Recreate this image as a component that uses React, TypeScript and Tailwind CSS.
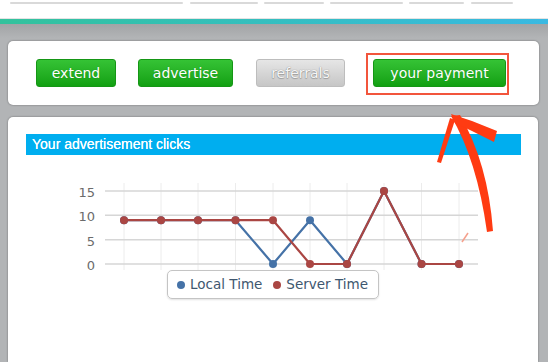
import React from "react";

const XS = [116, 153, 190, 227.5, 265, 302, 339, 376, 413.5, 451];
const yv = (v: number) => 109 - (v * 73) / 15;
const RED = [9, 9, 9, 9, 9, 0, 0, 15, 0, 0];
const BLUE = [9, 9, 9, 9, 0, 9, 0, 15, 0, 0];

function Chart() {
  const pts = (d: number[]) => d.map((v, i) => `${XS[i]},${yv(v)}`).join(" ");
  return (
    <svg width={531} height={115} className="block overflow-visible">
      {XS.map((x) => (
        <line key={"v" + x} x1={x} x2={x} y1={28} y2={115} stroke="#ececec" strokeWidth={1} />
      ))}
      {[0, 5, 10, 15].map((v) => (
        <g key={v}>
          <line x1={97} x2={470} y1={yv(v)} y2={yv(v)} stroke="#d6d6d6" strokeWidth={1.5} />
          <text
            x={87}
            y={yv(v) + 6}
            textAnchor="end"
            fontSize={13}
            fill="#6b6b6b"
            fontFamily="'DejaVu Sans', sans-serif"
          >
            {v}
          </text>
        </g>
      ))}
      <polyline points={pts(BLUE)} fill="none" stroke="#4572a7" strokeWidth={2.2} strokeLinejoin="round" />
      {BLUE.map((v, i) => (
        <circle key={"b" + i} cx={XS[i]} cy={yv(v)} r={4} fill="#4572a7" />
      ))}
      <polyline points={pts(RED)} fill="none" stroke="#aa4643" strokeWidth={2.2} strokeLinejoin="round" />
      {RED.map((v, i) => (
        <circle key={"r" + i} cx={XS[i]} cy={yv(v)} r={4} fill="#aa4643" />
      ))}
    </svg>
  );
}

function Btn({ label, w, disabled }: { label: string; w: string; disabled?: boolean }) {
  if (disabled) {
    return (
      <div
        className={`${w} h-[28px] flex items-center justify-center rounded-[3px] border border-[#bdbdbd] bg-gradient-to-b from-[#e6e6e6] to-[#c6c6c6] text-[14px] text-[#f6f6f6] [text-shadow:0_0_1px_#7f7f7f,0_1px_1px_#a0a0a0]`}
      >
        {label}
      </div>
    );
  }
  return (
    <div
      className={`${w} h-[28px] flex items-center justify-center rounded-[3px] border border-[#159615] bg-gradient-to-b from-[#35c335] to-[#11a011] text-[14px] text-white [text-shadow:0_0_1px_rgba(0,80,0,0.4)]`}
    >
      {label}
    </div>
  );
}

export default function App() {
  return (
    <div className="relative w-[548px] h-[362px] overflow-hidden bg-white font-['DejaVu_Sans',sans-serif]">
      {/* top tabs */}
      <div className="h-[19px] border-b border-[#e4e4e4] flex items-start pt-[2px] pl-[10px]">
        <div className="flex gap-[6px]">
          <div className="w-[173px] h-[2px] rounded-full bg-[#d9d9d9]" />
          <div className="w-[68px] h-[2px] rounded-full bg-[#d9d9d9] ml-[1px]" />
          <div className="w-[60px] h-[2px] rounded-full bg-[#d9d9d9]" />
          <div className="w-[73px] h-[2px] rounded-full bg-[#d9d9d9]" />
          <div className="w-[55px] h-[2px] rounded-full bg-[#d9d9d9]" />
          <div className="w-[42px] h-[2px] rounded-full bg-[#d9d9d9] ml-[1px]" />
        </div>
      </div>
      {/* teal bar */}
      <div className="h-[5px] bg-gradient-to-r from-[#34c29c] to-[#3ab9e2]" />
      {/* gray area */}
      <div className="h-[338px] pl-[8px] pr-[9px] pt-[17px] bg-[linear-gradient(#a2a4a6,#b2b4b6_14px,#b2b4b6)] flex flex-col gap-[12px]">
        <div className="relative h-[64px] bg-white rounded-[5px] shadow-[0_0_2px_rgba(0,0,0,0.45)] pt-[18px] pl-[28px] flex">
          <Btn label="extend" w="w-[80px]" />
          <div className="w-[22px]" />
          <Btn label="advertise" w="w-[95px]" />
          <div className="w-[23px]" />
          <Btn label="referrals" w="w-[89px]" disabled />
          <div className="w-[28px]" />
          <Btn label="your payment" w="w-[133px]" />
          <div className="absolute left-[358px] top-[12px] w-[143px] h-[42px] border-2 border-[#f2553c]" />
        </div>
        <div className="flex-1 bg-white rounded-t-[5px] shadow-[0_0_2px_rgba(0,0,0,0.45)] pt-[17px] mr-[1px] flex flex-col">
          <div className="ml-[18px] w-[495px] h-[21px] bg-[#00aeef] flex items-center pl-[6px] text-white text-[14px] font-['Liberation_Sans',sans-serif] [text-shadow:0_0_0.5px_#fff]">
            Your advertisement clicks
          </div>
          <Chart />
          <div className="mx-auto h-[29px] flex items-center pl-[9px] pr-[10px] border border-[#c4c4c4] rounded-[5px] shadow-[0_1px_2px_rgba(0,0,0,0.12)] text-[13.5px] text-[#3e576f]">
            <span className="w-[8px] h-[8px] rounded-full bg-[#4572a7]" />
            <span className="ml-[5px]">Local Time</span>
            <span className="ml-[11px] w-[8px] h-[8px] rounded-full bg-[#aa4643]" />
            <span className="ml-[5px]">Server Time</span>
          </div>
        </div>
      </div>
      {/* hand-drawn arrow overlay */}
      <svg className="absolute left-0 top-0 pointer-events-none" width={548} height={362}>
        <path d="M451 116 Q477 160 487 232 L493 231 Q488 163 460 115 Z" fill="#ff3b12" />
        <path d="M451 114 L472 121 L497 131 L494 142 L472 131 L455 123 Z" fill="#ff3b12" />
        <path d="M450 118 L455 120 L441 163 L437 162 Z" fill="#ff3b12" />
        <line x1={468} y1={233} x2={462} y2={242} stroke="#f5a08c" strokeWidth={1.5} />
      </svg>
    </div>
  );
}
